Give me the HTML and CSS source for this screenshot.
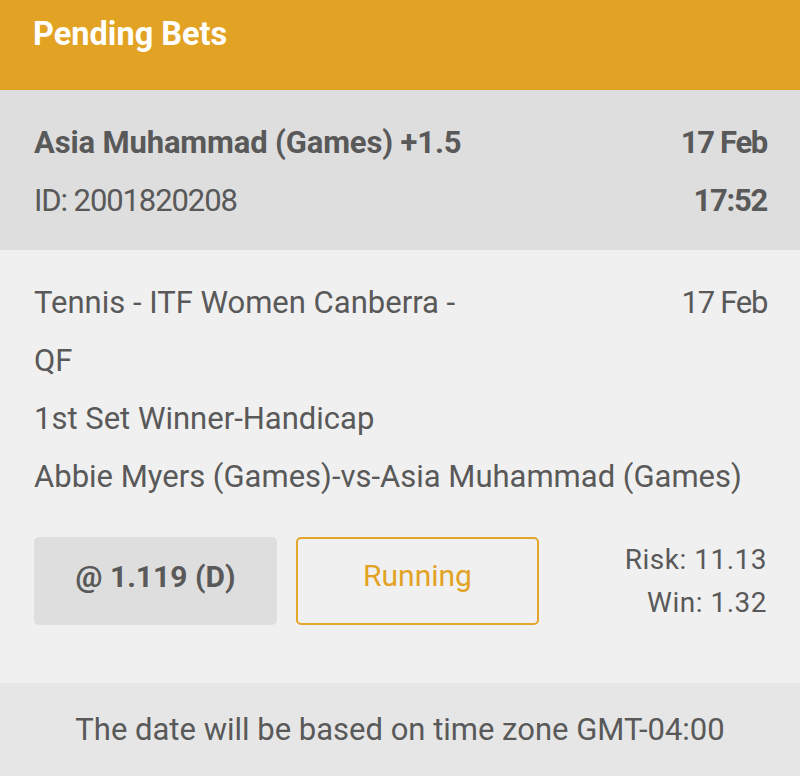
FILE: index.html
```html
<!DOCTYPE html>
<html>
<head>
<meta charset="utf-8">
<link rel="stylesheet" href="styles.css">
</head>
<body>
<div class="page">
  <header class="top-bar">
    <h1 class="title">Pending Bets</h1>
  </header>
  <section class="bet-head">
    <div class="row">
      <span class="strong selection">Asia Muhammad (Games) +1.5</span>
      <span class="strong tight">17 Feb</span>
    </div>
    <div class="row">
      <span class="bet-id">ID: 2001820208</span>
      <span class="strong tight">17:52</span>
    </div>
  </section>
  <section class="bet-body">
    <div class="event">
      <div class="event-text">
        <div class="line">Tennis - ITF Women Canberra -</div>
        <div class="line">QF</div>
        <div class="line">1st Set Winner-Handicap</div>
      </div>
      <div class="line tight">17 Feb</div>
    </div>
    <div class="line">Abbie Myers (Games)-vs-Asia Muhammad (Games)</div>
    <div class="actions">
      <div class="odds">@ 1.119 (D)</div>
      <div class="status">Running</div>
      <div class="amounts">
        <div>Risk: 11.13</div>
        <div>Win: 1.32</div>
      </div>
    </div>
  </section>
  <footer class="note">The date will be based on time zone GMT-04:00</footer>
</div>
</body>
</html>
```

FILE: styles.css
```css
* { box-sizing: border-box; }
html, body { margin: 0; padding: 0; }
body {
  font-family: Roboto, "Noto Sans", sans-serif;
  color: #595959;
  background: #f0f0f0;
  width: 800px;
  height: 776px;
  overflow: hidden;
}
.page { display: flex; flex-direction: column; height: 776px; }
.top-bar {
  background: #e2a224;
  height: 90px;
  padding: 14px 33px 0;
}
.title {
  margin: 0;
  color: #fff;
  font-size: 32.5px;
  font-weight: 700;
  line-height: 40px;
}
.bet-head {
  background: #dedede;
  height: 160px;
  padding: 24px 33px 0 34px;
  font-size: 31px;
  line-height: 58px;
}
.row { display: flex; justify-content: space-between; }
.strong { font-weight: 700; }
.selection { letter-spacing: -0.15px; }
.tight { letter-spacing: -1.3px; }
.bet-id { letter-spacing: -1.1px; }
.bet-body {
  background: #f0f0f0;
  flex: 1;
  padding: 24px 33px 0 34px;
  font-size: 31px;
  line-height: 58px;
}
.event { display: flex; justify-content: space-between; }
.line { white-space: nowrap; }
.actions {
  display: flex;
  align-items: flex-start;
  margin-top: 31px;
  gap: 19px;
}
.odds {
  width: 243px;
  height: 88px;
  background: #dedede;
  border-radius: 5px;
  font-size: 30px;
  font-weight: 700;
  display: flex;
  align-items: center;
  justify-content: center;
  line-height: 1;
  padding-bottom: 8px;
}
.status {
  width: 243px;
  height: 88px;
  border: 2px solid #e3a52c;
  border-radius: 5px;
  color: #e2a224;
  font-size: 30px;
  display: flex;
  align-items: center;
  justify-content: center;
  line-height: 1;
  padding-bottom: 10px;
}
.amounts {
  margin-left: auto;
  text-align: right;
  font-size: 28px;
  letter-spacing: 0.5px;
  line-height: 43px;
  padding-top: 1px;
}
.note {
  background: #e6e6e6;
  height: 93px;
  display: flex;
  align-items: center;
  justify-content: center;
  font-size: 31px;
}
```
